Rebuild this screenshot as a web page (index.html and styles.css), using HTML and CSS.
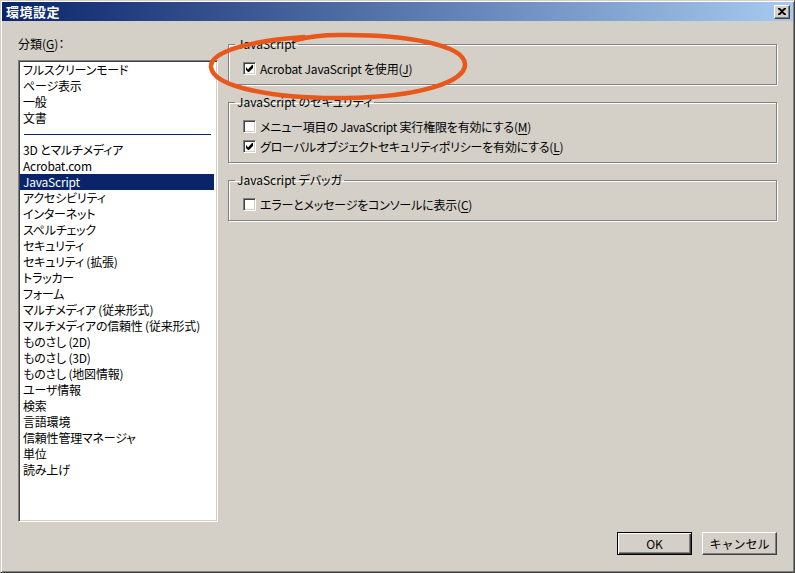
FILE: index.html
```html
<!DOCTYPE html>
<html lang="ja">
<head>
    <meta charset="UTF-8">
    <title>環境設定</title>
    <link rel="stylesheet" href="styles.css">
</head>
<body>
    <div class="window">
        <div class="titlebar">
            <span class="title">環境設定</span>
            <span class="close-btn">
                <svg width="8" height="7" viewBox="0 0 8 7"><path d="M0 0h2l2 2 2-2h2v1L5 3.5 8 6v1H6L4 5 2 7H0V6l3-2.5L0 1z" fill="#000"/></svg>
            </span>
        </div>

        <div class="content">
            <div class="left-col">
                <div class="label">分類(<u>G</u>)：</div>
                <div class="listbox">
                    <div class="item">フルスクリーンモード</div>
                    <div class="item">ページ表示</div>
                    <div class="item">一般</div>
                    <div class="item">文書</div>
                    <div class="separator"></div>
                    <div class="item">3D とマルチメディア</div>
                    <div class="item">Acrobat.com</div>
                    <div class="item selected">JavaScript</div>
                    <div class="item">アクセシビリティ</div>
                    <div class="item">インターネット</div>
                    <div class="item">スペルチェック</div>
                    <div class="item">セキュリティ</div>
                    <div class="item">セキュリティ (拡張)</div>
                    <div class="item">トラッカー</div>
                    <div class="item">フォーム</div>
                    <div class="item">マルチメディア (従来形式)</div>
                    <div class="item">マルチメディアの信頼性 (従来形式)</div>
                    <div class="item">ものさし (2D)</div>
                    <div class="item">ものさし (3D)</div>
                    <div class="item">ものさし (地図情報)</div>
                    <div class="item">ユーザ情報</div>
                    <div class="item">検索</div>
                    <div class="item">言語環境</div>
                    <div class="item">信頼性管理マネージャ</div>
                    <div class="item">単位</div>
                    <div class="item">読み上げ</div>
                </div>
            </div>

            <div class="right-col">
                <fieldset class="group">
                    <legend>JavaScript</legend>
                    <div class="check-row">
                        <span class="checkbox checked"><svg width="7" height="7" viewBox="0 0 7 7"><path d="M6 0h1v3L3 7H2L0 5V2l2 2.5z" fill="#000"/></svg></span>
                        <span>Acrobat JavaScript を使用(<u>J</u>)</span>
                    </div>
                </fieldset>

                <fieldset class="group">
                    <legend>JavaScript のセキュリティ</legend>
                    <div class="check-row">
                        <span class="checkbox"></span>
                        <span>メニュー項目の JavaScript 実行権限を有効にする(<u>M</u>)</span>
                    </div>
                    <div class="check-row">
                        <span class="checkbox checked"><svg width="7" height="7" viewBox="0 0 7 7"><path d="M6 0h1v3L3 7H2L0 5V2l2 2.5z" fill="#000"/></svg></span>
                        <span>グローバルオブジェクトセキュリティポリシーを有効にする(<u>L</u>)</span>
                    </div>
                </fieldset>

                <fieldset class="group">
                    <legend>JavaScript デバッガ</legend>
                    <div class="check-row">
                        <span class="checkbox"></span>
                        <span>エラーとメッセージをコンソールに表示(<u>C</u>)</span>
                    </div>
                </fieldset>

                <!-- 注釈の丸 -->
                <svg class="annotation" width="270" height="76" viewBox="0 0 270 76">
                    <path d="M96 7 C 40 11, 2 22, 3 37 C 5 58, 70 69, 138 68 C 210 67, 258 52, 257 34 C 256 15, 198 4, 130 5 C 112 5, 100 7, 88 10" fill="none" stroke="#e8581a" stroke-width="4.5" stroke-linecap="round"/>
                </svg>
            </div>
        </div>

        <div class="footer">
            <button class="btn default">OK</button>
            <button class="btn">キャンセル</button>
        </div>
    </div>
</body>
</html>
```

FILE: styles.css
```css
/* Windows クラシック風ダイアログ */
body { margin: 0; background: #d4d0c8; font-family: "Noto Sans CJK JP", "DejaVu Sans", sans-serif; font-size: 12px; color: #000; font-feature-settings: "palt"; }
u { text-decoration: underline; text-underline-offset: 2px; }

.window { width: 795px; height: 573px; box-sizing: border-box; background: #d4d0c8; border: 1px solid; border-color: #d4d0c8 #404040 #404040 #d4d0c8; box-shadow: inset 1px 1px 0 #fff, inset -1px -1px 0 #808080; padding: 1px; display: flex; flex-direction: column; }

.titlebar { height: 19px; background: linear-gradient(to right, #0a246a, #a6caf0); display: flex; align-items: center; justify-content: space-between; padding: 0 3px 0 4px; }
.title { color: #fff; font-weight: bold; font-size: 13px; line-height: 19px; letter-spacing: 0.5px; }
.close-btn { width: 16px; height: 14px; box-sizing: border-box; background: #d4d0c8; border: 1px solid; border-color: #fff #404040 #404040 #fff; box-shadow: inset -1px -1px 0 #808080; display: flex; align-items: center; justify-content: center; }

.content { display: flex; gap: 10px; padding: 15px 0 0 16px; position: relative; }
.left-col { width: 200px; }
.label { height: 16px; line-height: 16px; margin-bottom: 8px; }

.listbox { height: 462px; box-sizing: border-box; background: #fff; border: 1px solid; border-color: #808080 #fff #fff #808080; box-shadow: inset 1px 1px 0 #404040, inset -1px -1px 0 #d4d0c8; padding: 1px 2px; }
.item { height: 16px; line-height: 16px; padding-left: 2px; margin: 0 1px 0 0; white-space: nowrap; letter-spacing: -0.2px; }
.item.selected { background: #0a246a; color: #fff; margin-left: -1px; padding-left: 3px; }
.separator { height: 16px; position: relative; }
.separator::after { content: ""; position: absolute; left: 3px; right: 4px; top: 8px; height: 1px; background: #0a246a; }

.right-col { width: 549px; position: relative; }
.group { margin: 0 0 9px 0; padding: 6px 14px 6px 14px; border: 1px solid #808080; box-shadow: 1px 1px 0 #fff, inset 1px 1px 0 #fff; min-inline-size: 0; }
.group legend { padding: 0 2px; margin-left: -8px; height: 16px; line-height: 16px; }
.check-row { height: 20px; display: flex; align-items: center; gap: 4px; white-space: nowrap; letter-spacing: -0.2px; }
.checkbox { width: 13px; height: 13px; box-sizing: border-box; background: #fff; border: 1px solid; border-color: #808080 #fff #fff #808080; box-shadow: inset 1px 1px 0 #404040, inset -1px -1px 0 #d4d0c8; display: flex; align-items: center; justify-content: center; flex: none; }

.annotation { position: absolute; left: -20px; top: -6px; pointer-events: none; }

.footer { display: flex; justify-content: flex-end; gap: 10px; padding: 10px 16px 0 0; }
.btn { width: 75px; height: 23px; box-sizing: border-box; background: #d4d0c8; font-family: inherit; font-size: 12px; color: #000; border: 1px solid; border-color: #fff #404040 #404040 #fff; box-shadow: inset -1px -1px 0 #808080; padding: 0; }
.btn.default { border: 1px solid #000; box-shadow: inset 1px 1px 0 #fff, inset -1px -1px 0 #404040, inset -2px -2px 0 #808080; }
```
